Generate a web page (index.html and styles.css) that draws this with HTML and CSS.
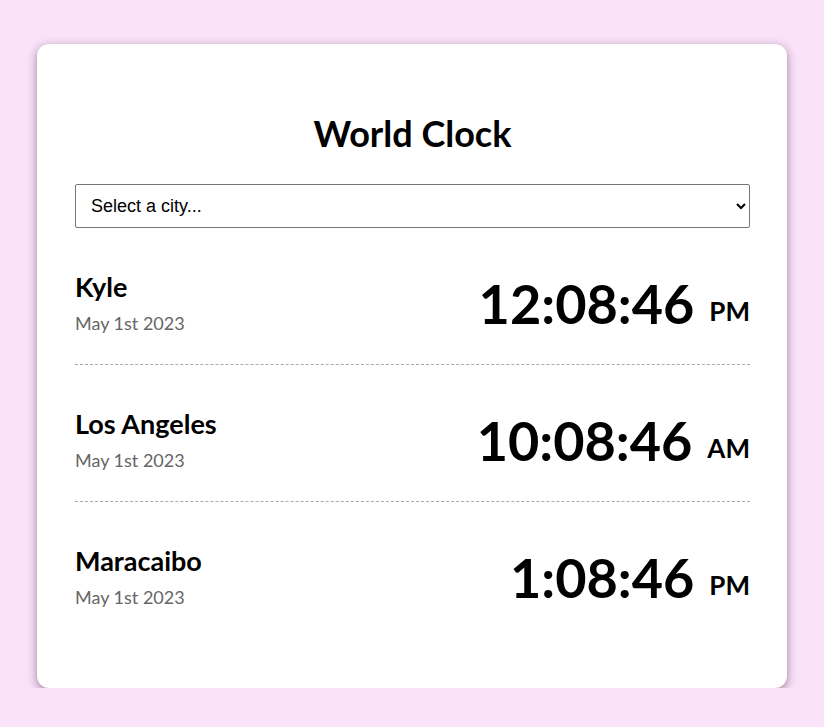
FILE: index.html
```html
<!DOCTYPE html>
<html lang="en">
<head>
<meta charset="utf-8">
<title>World Clock</title>
<link rel="stylesheet" href="styles.css">
</head>
<body>
<div class="card">
  <h1 class="title">World Clock</h1>
  <select class="city-select">
    <option>Select a city...</option>
  </select>
  <div class="cities">
    <div class="city">
      <div class="city-info">
        <div class="city-name">Kyle</div>
        <div class="city-date">May 1st 2023</div>
      </div>
      <div class="city-time">12:08:46<span class="ampm">PM</span></div>
    </div>
    <div class="city">
      <div class="city-info">
        <div class="city-name">Los Angeles</div>
        <div class="city-date">May 1st 2023</div>
      </div>
      <div class="city-time">10:08:46<span class="ampm">AM</span></div>
    </div>
    <div class="city">
      <div class="city-info">
        <div class="city-name">Maracaibo</div>
        <div class="city-date">May 1st 2023</div>
      </div>
      <div class="city-time">1:08:46<span class="ampm">PM</span></div>
    </div>
  </div>
</div>
</body>
</html>
```

FILE: styles.css
```css
html, body {
  margin: 0;
  padding: 0;
}
body {
  background: #fae2f8;
  font-family: Lato, "Open Sans", sans-serif;
  color: #000;
  padding-top: 44px;
}
.card {
  width: 750px;
  box-sizing: border-box;
  margin: 0 auto;
  background: #fff;
  border-radius: 12px;
  box-shadow: 0 3px 10px rgba(60, 30, 60, 0.5);
  padding: 64px 37px 50px 38px;
}
.title {
  margin: 0 0 26px;
  text-align: center;
  font-size: 36px;
  line-height: 50px;
  font-weight: 700;
}
.city-select {
  display: block;
  width: 100%;
  height: 44px;
  box-sizing: border-box;
  font-family: "Liberation Sans", Arial, sans-serif;
  font-size: 18px;
  color: #000;
  background: #fff;
  border: 1px solid #767676;
  border-radius: 2px;
  padding: 0 10px 0 11px;
}
.city {
  display: flex;
  justify-content: space-between;
  align-items: center;
  padding: 44px 0 29px;
  border-bottom: 1px dashed #aaa;
}
.city:last-child {
  border-bottom: none;
}
.city-name {
  font-size: 27px;
  font-weight: 700;
  line-height: 30px;
}
.city-date {
  margin-top: 9px;
  font-size: 18px;
  line-height: 24px;
  color: #666;
}
.city-time {
  font-size: 54px;
  font-weight: 700;
  line-height: 60px;
}
.ampm {
  font-size: 26px;
  line-height: 1;
  margin-left: 15px;
  vertical-align: 3px;
}
```
